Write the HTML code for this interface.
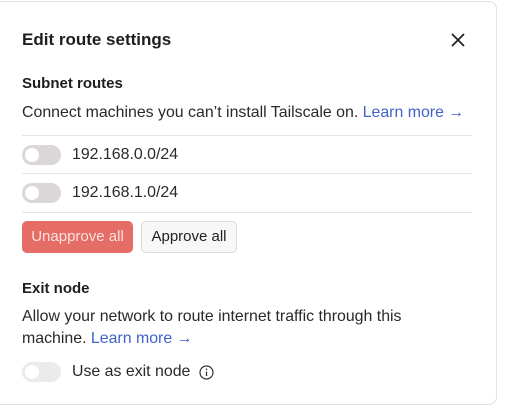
<!DOCTYPE html>
<html><head><style>
*{margin:0;padding:0;box-sizing:border-box}
body{width:510px;height:409px;background:#fff;font-family:"Liberation Sans",sans-serif;color:#1f1e1e;position:relative;overflow:hidden}
.card{position:absolute;left:-10px;top:1px;width:507px;height:404px;border:1px solid #e3e1e1;border-radius:8px;background:#fff}
.a{position:absolute;white-space:nowrap}
.t{left:22px;top:30px;font-size:17px;font-weight:bold}
.h{font-size:15px;font-weight:bold;left:22px}
.p{font-size:15.9px;left:22px;color:#2a2929}
.l{color:#3f63c9}
.hr{position:absolute;left:22px;width:450px;height:1px;background:#e6e4e4}
.tg{position:absolute;left:22px;width:39px;height:20px;border-radius:10px;background:#dad7d6}
.tg::after{content:"";position:absolute;left:3px;top:3px;width:14px;height:14px;border-radius:50%;background:#fff}
.btn{position:absolute;top:221px;height:32px;border-radius:5px;font-size:15px;line-height:32px;text-align:center}
</style></head><body>
<div class="card"></div>
<div class="a t">Edit route settings</div>
<svg class="a" style="left:451px;top:33px" width="14" height="14" viewBox="0 0 14 14"><path d="M1.5 1.5L12.5 12.5M12.5 1.5L1.5 12.5" stroke="#222" stroke-width="1.8" stroke-linecap="round"/></svg>
<div class="a h" style="top:75px">Subnet routes</div>
<div class="a p" style="top:104px">Connect machines you can’t install Tailscale on. <span class="l">Learn more →</span></div>
<div class="hr" style="top:135px"></div>
<div class="tg" style="top:145px"></div>
<div class="a p" style="left:72px;top:146px">192.168.0.0/24</div>
<div class="hr" style="top:173px"></div>
<div class="tg" style="top:183px"></div>
<div class="a p" style="left:72px;top:184px">192.168.1.0/24</div>
<div class="hr" style="top:212px"></div>
<div class="btn" style="left:22px;width:111px;background:#e56d65;color:#fbe2df">Unapprove all</div>
<div class="btn" style="left:141px;width:96px;background:#f8f7f7;border:1px solid #dcdada;line-height:30px">Approve all</div>
<div class="a h" style="top:280px">Exit node</div>
<div class="a p" style="top:308px">Allow your network to route internet traffic through this</div>
<div class="a p" style="top:330px">machine. <span class="l">Learn more →</span></div>
<div class="tg" style="top:362px;background:#eceaea"></div>
<div class="a p" style="left:72px;top:363px">Use as exit node</div>
<svg class="a" style="left:199px;top:365px" width="15" height="15" viewBox="0 0 15 15"><circle cx="7.5" cy="7.5" r="6.5" fill="none" stroke="#333" stroke-width="1.2"/><path d="M7.5 6.5V11" stroke="#333" stroke-width="1.3"/><circle cx="7.5" cy="4.3" r="0.8" fill="#333"/></svg>
</body></html>
